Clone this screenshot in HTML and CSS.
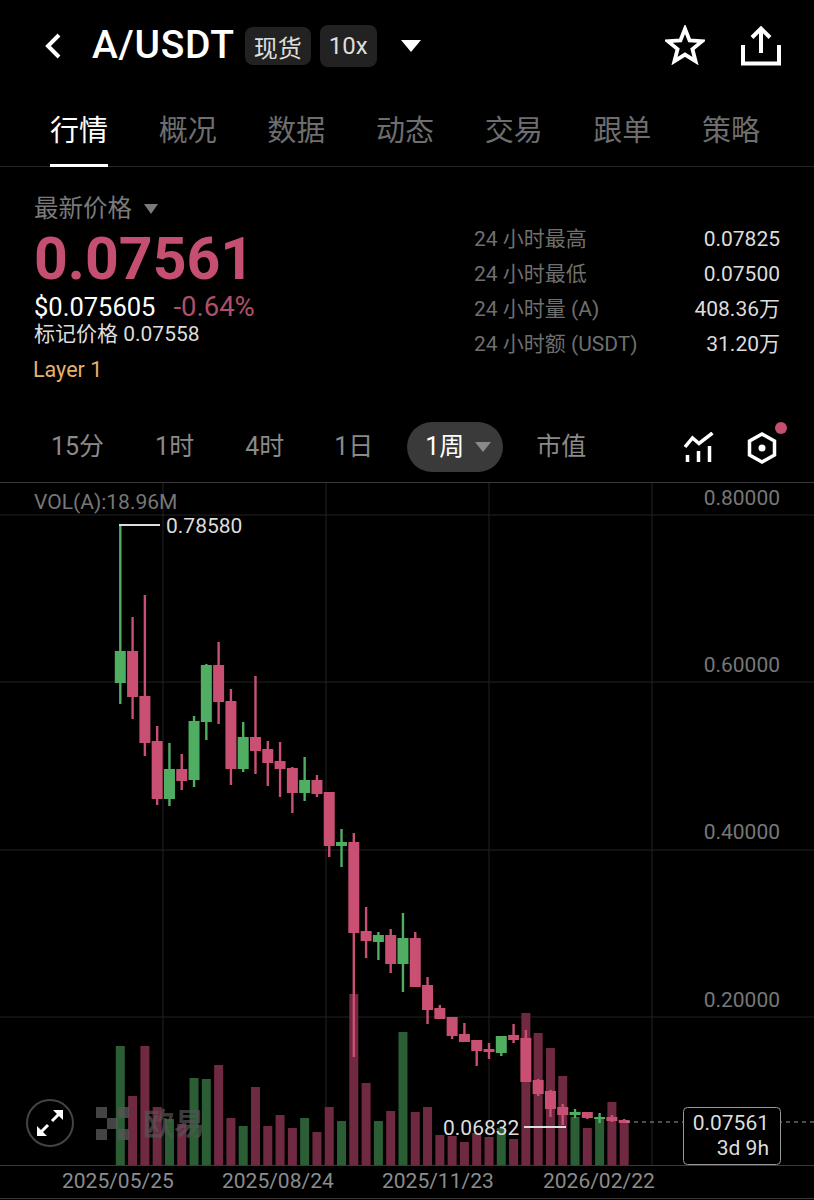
FILE: index.html
```html
<!DOCTYPE html>
<html lang="zh-CN">
  <head>
    <meta charset="utf-8" />
    <meta name="viewport" content="width=device-width, initial-scale=1.0" />
    <title>A/USDT</title>
    <link rel="stylesheet" href="styles.css">
  </head>

  <body>
    <header class="topbar">
      <svg class="back" width="18" height="26" viewBox="0 0 18 26">
        <path d="M15 2 L4 13 L15 24" />
      </svg>
      <h1 class="pair">A/USDT</h1>
      <span class="tag tag-spot">现货</span>
      <span class="tag tag-lever">10x</span>
      <span class="pair-caret"></span>
      <svg class="star" width="40" height="40" viewBox="0 0 42 42">
        <path d="M21 4 L25.800 16.100 L39 17 L28.800 25.300 L32.100 38 L21 31 L9.900 38 L13.200 25.300 L3 17 L16.200 16.100 Z" />
      </svg>
      <svg class="share" width="40" height="40" viewBox="0 0 40 40">
        <path d="M20 27 V3 M11 11.500 L20 2.500 L29 11.500" />
        <path d="M2 19 V37.500 H38 V19" />
      </svg>
    </header>

    <nav class="tabs">
      <a class="tab active">行情</a>
      <a class="tab">概况</a>
      <a class="tab">数据</a>
      <a class="tab">动态</a>
      <a class="tab">交易</a>
      <a class="tab">跟单</a>
      <a class="tab">策略</a>
    </nav>

    <section class="summary">
      <div class="price-col">
        <div class="price-label">最新价格<span class="label-caret"></span></div>
        <div class="price">0.07561</div>
        <div class="price-usd">$0.075605<span class="change">-0.64%</span></div>
        <div class="mark">标记价格 0.07558</div>
        <div class="sector">Layer 1</div>
      </div>
      <dl class="stats">
        <div class="stat"><dt>24 小时最高</dt><dd>0.07825</dd></div>
        <div class="stat"><dt>24 小时最低</dt><dd>0.07500</dd></div>
        <div class="stat"><dt>24 小时量 (A)</dt><dd>408.36万</dd></div>
        <div class="stat"><dt>24 小时额 (USDT)</dt><dd>31.20万</dd></div>
      </dl>
    </section>

    <div class="periods">
      <span class="period p-15m">15分</span>
      <span class="period p-1h">1时</span>
      <span class="period p-4h">4时</span>
      <span class="period p-1d">1日</span>
      <span class="period pill">1周<i class="pill-caret"></i></span>
      <span class="period p-cap">市值</span>
      <svg class="tool tool-indicator" width="30" height="32" viewBox="0 0 30 32">
        <path d="M1 15 L8.500 6 L15 11.500 L28.500 1" />
        <path d="M3.500 23 V30 M14.500 19 V30 M25.500 14 V30" />
      </svg>
      <span class="tool-wrap">
        <svg class="tool" width="30" height="32" viewBox="0 0 30 32">
          <path d="M15 2 L27.500 9 V23 L15 30 L2.500 23 V9 Z" />
          <circle class="hex-dot" cx="15" cy="16" r="3.500" />
        </svg>
        <i class="notice-dot"></i>
      </span>
    </div>

    <main class="chart">
      <svg id="plot" width="814" height="718" viewBox="0 482 814 718"></svg>
      <button class="expand">
        <svg width="30" height="30" viewBox="0 0 30 30">
          <path d="M17 13 L26 4 M13 17 L4 26" />
          <path class="head" d="M18 2 H28 V12 Z M2 18 V28 H12 Z" />
        </svg>
      </button>
    </main>

    <script src="chart.js"></script>
  </body>
</html>
```

FILE: styles.css
```css
* {
  box-sizing: border-box;
}

html,
body {
  margin: 0;
  height: 1200px;
  overflow: hidden;
  background: #000;
}

body {
  font-family: Roboto, "Noto Sans CJK SC", sans-serif;
  color: #ddd;
}

/* top bar */
.topbar {
  display: flex;
  align-items: center;
  height: 92px;
  padding-left: 44px;
}

.back {
  margin-right: 30px;
}

.back path,
.share path {
  fill: none;
  stroke: #fff;
  stroke-width: 4;
}

.pair {
  margin: 0 10px 3px 0;
  font-size: 39px;
  font-weight: 500;
  letter-spacing: 0.7px;
  color: #fff;
}

.tag {
  display: flex;
  align-items: center;
  justify-content: center;
  background: #222;
  border-radius: 8px;
  font-size: 24px;
  color: #ddd;
}

.tag-spot {
  width: 66px;
  height: 38px;
  margin-right: 9px;
}

.tag-lever {
  width: 57px;
  height: 42px;
  margin-right: 24px;
}

.pair-caret {
  width: 0;
  height: 0;
  border-left: 10px solid transparent;
  border-right: 10px solid transparent;
  border-top: 12px solid #fff;
}

.star {
  margin: 0 36px 3px auto;
}

.star path {
  fill: none;
  stroke: #fff;
  stroke-width: 4;
}

.share {
  margin: 0 33px 1px 0;
}

/* tabs */
.tabs {
  display: flex;
  gap: 50.670px;
  height: 75px;
  padding-left: 50px;
  border-bottom: 1px solid #262626;
}

.tab {
  display: flex;
  align-items: center;
  height: 75px;
  padding-top: 6px;
  border-bottom: 3px solid transparent;
  font-size: 29px;
  line-height: 1;
  color: #6e6e6e;
}

.tab.active {
  color: #fff;
  border-bottom-color: #fff;
}

/* price block */
.summary {
  display: flex;
  justify-content: space-between;
  height: 255px;
  padding: 25px 34px 0;
}

.price-label {
  display: flex;
  align-items: center;
  font-size: 24.500px;
  line-height: 34px;
  color: #7a7a7a;
}

.label-caret {
  width: 0;
  height: 0;
  margin-left: 12px;
  border-left: 7px solid transparent;
  border-right: 7px solid transparent;
  border-top: 10px solid #7a7a7a;
}

.price {
  font-size: 59px;
  font-weight: 700;
  line-height: 66px;
  color: #c44f70;
}

.price-usd {
  height: 28px;
  margin-top: 1px;
  font-size: 25.500px;
  line-height: 28px;
  color: #fff;
}

.change {
  margin-left: 18px;
  font-size: 27.500px;
  color: #b04f68;
}

.mark {
  font-size: 21px;
  line-height: 26px;
  color: #ddd;
}

.sector {
  margin: 10px 0 0 -1px;
  font-size: 21.500px;
  line-height: 26px;
  color: #e6b26c;
}

.stats {
  width: 306px;
  margin: 29.500px 0 0;
}

.stat {
  display: flex;
  justify-content: space-between;
  font-size: 21px;
  line-height: 35px;
}

.stat dt {
  color: #6f6f6f;
}

.stat dd {
  margin: 0;
  color: #ddd;
}

/* period selector */
.periods {
  display: flex;
  align-items: flex-start;
  height: 60px;
  padding-left: 51px;
}

.period {
  font-size: 25px;
  line-height: 50px;
  color: #8a8a8a;
}

.p-1h,
.p-4h {
  margin-left: 51px;
}

.p-1d {
  margin-left: 50px;
}

.pill {
  display: flex;
  align-items: center;
  height: 50px;
  margin: 0 33px 0 34px;
  padding: 0 12px 0 18px;
  background: #3a3a3a;
  border-radius: 25px;
  color: #fff;
}

.pill-caret {
  width: 0;
  height: 0;
  margin-left: 11px;
  border-left: 8px solid transparent;
  border-right: 8px solid transparent;
  border-top: 10px solid #8a8a8a;
}

.tool {
  display: block;
}

.tool path {
  fill: none;
  stroke: #fff;
  stroke-width: 3.500;
}

.tool-indicator {
  margin: 10px 33px 0 auto;
}

.tool-wrap {
  position: relative;
  margin: 10px 37px 0 0;
}

.hex-dot {
  fill: #fff;
}

.notice-dot {
  position: absolute;
  top: -10px;
  right: -10px;
  width: 12px;
  height: 12px;
  background: #c44f70;
  border-radius: 50%;
}

/* chart */
.chart {
  position: relative;
  height: 718px;
}

#plot {
  display: block;
}

.grid-line {
  stroke: #232323;
  stroke-width: 1;
}

.frame-line {
  stroke: #3a3a3a;
  stroke-width: 1;
}

.vol-up {
  fill: #2b5e35;
}

.vol-down {
  fill: #6f2a42;
}

.up {
  fill: #4fae62;
}

.down {
  fill: #c94f73;
}

.axis-text {
  font-size: 21px;
  fill: #777;
}

.date-text {
  font-size: 21px;
  fill: #8c8c8c;
}

.mark-text {
  font-size: 21px;
  fill: #ddd;
}

.mark-line {
  stroke: #ddd;
  stroke-width: 2;
}

.last-line {
  stroke: #999;
  stroke-width: 1;
  stroke-dasharray: 4 4;
}

.last-box {
  fill: #000;
  stroke: #999;
  stroke-width: 1;
}

.logo-square {
  fill: #555;
  opacity: 0.8;
}

.logo-text {
  font-size: 31px;
  font-weight: 700;
  fill: #555;
  opacity: 0.7;
}

.expand {
  position: absolute;
  left: 26px;
  top: 617px;
  display: flex;
  align-items: center;
  justify-content: center;
  width: 48px;
  height: 48px;
  padding: 0;
  background: none;
  border: 2px solid #444;
  border-radius: 50%;
}

.expand path {
  fill: none;
  stroke: #fff;
  stroke-width: 3;
}

.expand path.head {
  fill: #fff;
  stroke: none;
}
```

FILE: chart.js
```js
const plot = document.getElementById("plot");
const NS = "http://www.w3.org/2000/svg";

// page pixels: [up?, wick top, body top, body bottom, wick bottom, volume top]
const candles = [
  [1, 526, 651, 683, 704, 1046],
  [0, 617, 651, 697, 719, 1096],
  [0, 595, 696, 743, 756, 1046],
  [0, 726, 741, 799, 805, 1107],
  [1, 743, 769, 799, 806, 1119],
  [0, 754, 769, 781, 790, 1124],
  [1, 716, 721, 780, 787, 1078],
  [1, 664, 665, 722, 740, 1079],
  [0, 642, 665, 702, 724, 1065],
  [0, 689, 701, 769, 785, 1118],
  [1, 722, 737, 769, 772, 1126],
  [0, 676, 737, 751, 774, 1087],
  [0, 741, 749, 763, 786, 1126],
  [0, 742, 761, 769, 797, 1115],
  [0, 767, 768, 793, 813, 1128],
  [1, 757, 780, 793, 801, 1118],
  [0, 775, 780, 794, 797, 1132],
  [0, 792, 792, 846, 857, 1107],
  [1, 829, 842, 846, 867, 1121],
  [0, 833, 842, 933, 1057, 994],
  [0, 907, 931, 941, 958, 1083],
  [1, 932, 935, 942, 960, 1121],
  [0, 929, 935, 964, 973, 1111],
  [1, 913, 938, 964, 992, 1032],
  [0, 932, 938, 987, 987, 1112],
  [0, 977, 985, 1010, 1024, 1107],
  [0, 1005, 1008, 1019, 1019, 1135],
  [0, 1017, 1017, 1036, 1039, 1136],
  [0, 1023, 1034, 1042, 1042, 1142],
  [0, 1040, 1040, 1051, 1066, 1133],
  [0, 1043, 1049, 1052, 1059, 1137],
  [1, 1036, 1036, 1053, 1056, 1128],
  [0, 1024, 1035, 1040, 1043, 1139],
  [0, 1030, 1038, 1082, 1082, 1013],
  [0, 1079, 1080, 1094, 1096, 1033],
  [0, 1090, 1091, 1109, 1117, 1048],
  [0, 1104, 1107, 1115, 1125, 1076],
  [1, 1109, 1112, 1115, 1118, 1117],
  [0, 1112, 1112, 1118, 1119, 1128],
  [1, 1113, 1117, 1119, 1123, 1117],
  [0, 1115, 1117, 1121, 1122, 1102],
  [0, 1119, 1120, 1123, 1123, 1122],
];

const add = (name, cls, attrs, text) => {
  const el = document.createElementNS(NS, name);
  if (cls) el.setAttribute("class", cls);
  Object.keys(attrs).forEach((k) => el.setAttribute(k, attrs[k]));
  if (text) el.textContent = text;
  plot.appendChild(el);
  return el;
};

const hLine = (y, cls) => add("line", cls, { x1: 0, x2: 814, y1: y, y2: y });

[163, 326, 489, 652].forEach((x) => {
  add("line", "grid-line", { x1: x, x2: x, y1: 482, y2: 1165 });
});
[515, 682, 850, 1017].forEach((y) => hLine(y, "grid-line"));
[482.5, 1165.5, 1198.5].forEach((y) => hLine(y, "frame-line"));

candles.forEach((c, i) => {
  const x = 120.3 + i * 12.29;
  add("rect", c[0] ? "vol-up" : "vol-down", {
    x: x - 4.5,
    y: c[5],
    width: 9,
    height: 1165 - c[5],
  });
});

candles.forEach((c, i) => {
  const x = 120.3 + i * 12.29;
  const cls = c[0] ? "up" : "down";
  add("rect", cls, { x: x - 1.2, y: c[1], width: 2.4, height: c[4] - c[1] });
  add("rect", cls, { x: x - 5.5, y: c[2], width: 11, height: c[3] - c[2] });
});

// price axis
[
  ["0.80000", 505],
  ["0.60000", 672],
  ["0.40000", 839],
  ["0.20000", 1007],
].forEach(([label, y]) => {
  add("text", "axis-text", { x: 780, y, "text-anchor": "end" }, label);
});
add("text", "axis-text", { x: 34, y: 509 }, "VOL(A):18.96M");

// dates
[
  ["2025/05/25", 62],
  ["2025/08/24", 222],
  ["2025/11/23", 382],
  ["2026/02/22", 543],
].forEach(([label, x]) => {
  add("text", "date-text", { x, y: 1188 }, label);
});

// high and low markers
add("line", "mark-line", { x1: 119, x2: 160, y1: 525, y2: 525 });
add("text", "mark-text", { x: 166, y: 533 }, "0.78580");
add("line", "mark-line", { x1: 524, x2: 566, y1: 1127, y2: 1127 });
add("text", "mark-text", { x: 443, y: 1135 }, "0.06832");

// last price
add("line", "last-line", { x1: 626, x2: 814, y1: 1122, y2: 1122 });
add("rect", "last-box", { x: 683.5, y: 1107.5, width: 97, height: 57, rx: 4 });
add("text", "mark-text", { x: 769, y: 1130, "text-anchor": "end" }, "0.07561");
add("text", "mark-text", { x: 769, y: 1155, "text-anchor": "end" }, "3d 9h");

// watermark
[
  [96, 1107],
  [96, 1129],
  [107, 1118],
  [118, 1107],
  [118, 1129],
].forEach(([x, y]) => {
  add("rect", "logo-square", { x, y, width: 11, height: 11 });
});
add("text", "logo-text", { x: 143, y: 1135 }, "欧易");
```
